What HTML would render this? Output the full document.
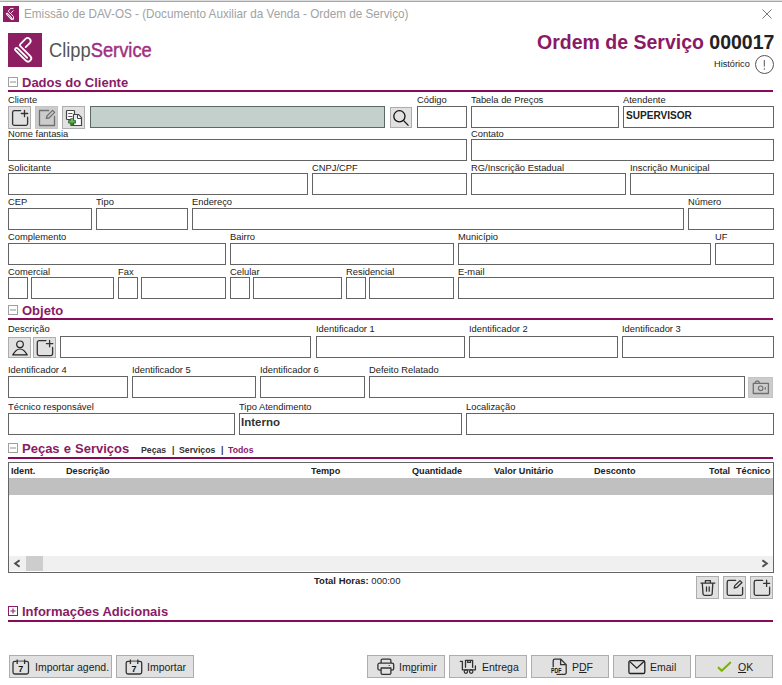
<!DOCTYPE html>
<html><head><meta charset="utf-8">
<style>
*{box-sizing:border-box;margin:0;padding:0}
html,body{width:782px;height:685px;overflow:hidden;background:#fff;font-family:"Liberation Sans",sans-serif;color:#222}
.a{position:absolute}
svg.a{overflow:visible}
.f{position:absolute;border:1px solid #646464;background:#fff}
.l{position:absolute;font-size:9.6px;color:#222;white-space:nowrap;line-height:10px;transform:scaleX(0.975);transform-origin:0 0}
.b{position:absolute;background:#e1e1e1;border:1px solid #adadad}
.sh{position:absolute;left:8px;width:10px;height:10px;border:1px solid #a0a0a0;background:#fff}
.sh:after{content:"";position:absolute;left:1px;top:3px;width:6px;height:2px;background:#c8c8c8}
.st{position:absolute;left:22px;font-weight:bold;font-size:13px;color:#8a1a66;white-space:nowrap;line-height:13px}
.sl{position:absolute;left:8px;width:765px;height:2px;background:#8a0a5a}
.th{position:absolute;top:466px;font-weight:bold;font-size:9.6px;color:#222;white-space:nowrap;line-height:10px;transform:scaleX(0.95);transform-origin:0 0}
.btn{position:absolute;top:655px;height:23px;background:#e1e1e1;border:1px solid #adadad;font-size:10.5px;color:#222;white-space:nowrap;line-height:21px;padding-top:1px}
.pk{top:445px;font-weight:bold;font-size:9.8px;color:#333;white-space:nowrap;line-height:10px;transform:scaleX(0.89);transform-origin:0 0}
.ic{fill:none;stroke:#333;stroke-width:1.3;stroke-linecap:round;stroke-linejoin:round}
.icg{fill:none;stroke:#707070;stroke-width:1.3;stroke-linecap:round;stroke-linejoin:round}
u{text-decoration:underline;text-underline-offset:1px}
</style></head><body>
<!-- title bar -->
<div class="a" style="left:0;top:0;width:782px;height:1px;background:#dcdcdc"></div>
<div class="a" style="left:0;top:1px;width:782px;height:1px;background:#a8a8a8"></div>
<svg class="a" style="left:3px;top:6px" width="16" height="16" viewBox="0 0 16 16">
<rect width="16" height="16" fill="#8e1e62"/>
<path d="M10.5 2.4H7.6L5.2 5.2L10.5 10.5V13.4H8.4M10.5 4.5L7.4 7.6" fill="none" stroke="#fff" stroke-width="0.9"/>
<path d="M4 7.8L8.6 12.8" fill="none" stroke="#fff" stroke-width="2.2" stroke-linecap="round"/>
<path d="M4.3 8.1L8.3 12.5" fill="none" stroke="#8e1e62" stroke-width="0.6"/>
</svg>
<div class="a" style="left:24px;top:6px;font-size:12.8px;color:#a2a2a2;white-space:nowrap;line-height:16px;transform:scaleX(0.915);transform-origin:0 0">Emissão de DAV-OS - (Documento Auxiliar da Venda - Ordem de Serviço)</div>
<svg class="a" style="left:762px;top:9px" width="10" height="10"><path d="M0.5 0.5L9.5 9.5M9.5 0.5L0.5 9.5" stroke="#6a6a6a" stroke-width="0.9"/></svg>

<!-- logo -->
<svg class="a" style="left:8px;top:33px" width="34" height="34" viewBox="0 0 34 34">
<rect width="34" height="34" fill="#8e1e62"/>
<g fill="none" stroke="#fff" stroke-width="1.8" stroke-linecap="round" stroke-linejoin="round">
<path d="M17.68 14.14L21.78 10.04A3 3 0 0 0 17.54 5.8L12.31 11.03A1.5 1.5 0 0 0 12.3 13.15L22.31 23.16A3.2 3.2 0 0 1 17.78 27.68L7.5 17.4A1.5 1.5 0 0 1 9.62 15.27L19.09 24.75"/>
</g>
</svg>
<div class="a" style="left:49px;top:38px;font-size:20px;color:#555;white-space:nowrap;line-height:24px;transform:scaleX(0.915);transform-origin:0 0">Clipp<span style="color:#a0307f;-webkit-text-stroke:0.45px #a0307f">Service</span></div>

<div class="a" style="left:537px;top:31px;font-weight:bold;font-size:19.5px;color:#8a1a66;white-space:nowrap;line-height:22px">Ordem de Serviço <span style="color:#222">000017</span></div>
<div class="a" style="left:714px;top:59px;font-size:9.2px;color:#222;white-space:nowrap;line-height:10px">Histórico</div>
<svg class="a" style="left:755px;top:55px" width="19" height="19" viewBox="0 0 19 19"><circle cx="9.5" cy="9.5" r="9" fill="none" stroke="#555" stroke-width="1"/><path d="M9.3 5V11.6M9.3 13.2V14.7" stroke="#555" stroke-width="1"/></svg>

<!-- Dados do Cliente -->
<div class="sh" style="top:77px"></div>
<div class="st" style="top:76px">Dados do Cliente</div>
<div class="sl" style="top:90px"></div>

<div class="l" style="left:8px;top:95px">Cliente</div>
<div class="b" style="left:8px;top:106px;width:23px;height:23px"></div>
<svg class="a" style="left:8px;top:106px" width="23" height="23"><path class="ic" d="M12.6 4.6H6.4A1.8 1.8 0 0 0 4.6 6.4V17.6A1.8 1.8 0 0 0 6.4 19.4H17.8A1.8 1.8 0 0 0 19.6 17.6V11.2M16.5 4.3V10.7M13.3 7.5H19.7"/></svg>
<div class="b" style="left:35px;top:106px;width:23px;height:23px;background:#cccccc;border-color:#c4c4c4"></div>
<svg class="a" style="left:35px;top:106px" width="23" height="23"><path class="icg" d="M13.6 4.5H4.5V19.5H19.5V10.5M11.3 12.4L12 10L17.6 4.4L19.6 6.4L14 12L11.3 12.4Z" stroke-width="1.15"/></svg>
<div class="b" style="left:62px;top:106px;width:23px;height:23px"></div>
<svg class="a" style="left:62px;top:106px" width="23" height="23">
<defs><linearGradient id="gg" x1="0" y1="0" x2="0" y2="1"><stop offset="0" stop-color="#9be07a"/><stop offset="1" stop-color="#0e800e"/></linearGradient></defs>
<rect x="4.5" y="4.5" width="8" height="9" rx="0.8" fill="#fff" stroke="#444" stroke-width="1.2"/>
<path d="M6.3 7.5H10.4M6.3 10.5H10.4" stroke="#555" stroke-width="1"/>
<path d="M11.5 8.5H16.5L19.5 11.5V19.5H11.5Z" fill="#fff" stroke="#444" stroke-width="1.2"/>
<path d="M15.5 8.5V12.5H19.5" fill="none" stroke="#444" stroke-width="1"/>
<rect x="12.7" y="9.5" width="2.2" height="3" fill="#cfe8f8"/>
<path d="M8.7 12.7H11.4V14.4H13.5V17.1H11.4V19.5H8.7V17.1H6.6V14.4H8.7Z" fill="url(#gg)" stroke="#2f4f2f" stroke-width="0.8"/>
</svg>
<div class="f" style="left:90px;top:106px;width:295px;height:22px;background:#c3d0cb;border-color:#5a6a60"></div>
<div class="b" style="left:390px;top:107px;width:22px;height:21px"></div>
<svg class="a" style="left:390px;top:107px" width="22" height="21"><circle cx="9.4" cy="9.3" r="5.6" fill="none" stroke="#111" stroke-width="1.3"/><path d="M13.6 13.6L18.5 18.6" stroke="#111" stroke-width="1.3"/></svg>
<div class="l" style="left:417px;top:95px">Código</div>
<div class="f" style="left:417px;top:106px;width:50px;height:22px"></div>
<div class="l" style="left:471px;top:95px">Tabela de Preços</div>
<div class="f" style="left:471px;top:106px;width:148px;height:22px"></div>
<div class="l" style="left:623px;top:95px">Atendente</div>
<div class="f" style="left:623px;top:106px;width:151px;height:22px"></div>
<div class="a" style="left:626px;top:110px;font-weight:bold;font-size:11px;color:#222;line-height:11px;transform:scaleX(0.915);transform-origin:0 0">SUPERVISOR</div>

<div class="l" style="left:8px;top:129px">Nome fantasia</div>
<div class="f" style="left:8px;top:139px;width:459px;height:22px"></div>
<div class="l" style="left:471px;top:129px">Contato</div>
<div class="f" style="left:471px;top:139px;width:303px;height:22px"></div>

<div class="l" style="left:8px;top:163px">Solicitante</div>
<div class="f" style="left:8px;top:173px;width:300px;height:22px"></div>
<div class="l" style="left:312px;top:163px">CNPJ/CPF</div>
<div class="f" style="left:312px;top:173px;width:155px;height:22px"></div>
<div class="l" style="left:471px;top:163px">RG/Inscrição Estadual</div>
<div class="f" style="left:471px;top:173px;width:155px;height:22px"></div>
<div class="l" style="left:630px;top:163px">Inscrição Municipal</div>
<div class="f" style="left:630px;top:173px;width:144px;height:22px"></div>

<div class="l" style="left:8px;top:197px">CEP</div>
<div class="f" style="left:8px;top:208px;width:84px;height:22px"></div>
<div class="l" style="left:96px;top:197px">Tipo</div>
<div class="f" style="left:96px;top:208px;width:92px;height:22px"></div>
<div class="l" style="left:192px;top:197px">Endereço</div>
<div class="f" style="left:192px;top:208px;width:492px;height:22px"></div>
<div class="l" style="left:688px;top:197px">Número</div>
<div class="f" style="left:688px;top:208px;width:86px;height:22px"></div>

<div class="l" style="left:8px;top:232px">Complemento</div>
<div class="f" style="left:8px;top:243px;width:218px;height:22px"></div>
<div class="l" style="left:230px;top:232px">Bairro</div>
<div class="f" style="left:230px;top:243px;width:224px;height:22px"></div>
<div class="l" style="left:458px;top:232px">Município</div>
<div class="f" style="left:458px;top:243px;width:253px;height:22px"></div>
<div class="l" style="left:715px;top:232px">UF</div>
<div class="f" style="left:715px;top:243px;width:59px;height:22px"></div>

<div class="l" style="left:8px;top:267px">Comercial</div>
<div class="f" style="left:8px;top:277px;width:20px;height:22px"></div>
<div class="f" style="left:31px;top:277px;width:83px;height:22px"></div>
<div class="l" style="left:118px;top:267px">Fax</div>
<div class="f" style="left:118px;top:277px;width:20px;height:22px"></div>
<div class="f" style="left:141px;top:277px;width:85px;height:22px"></div>
<div class="l" style="left:230px;top:267px">Celular</div>
<div class="f" style="left:230px;top:277px;width:20px;height:22px"></div>
<div class="f" style="left:253px;top:277px;width:89px;height:22px"></div>
<div class="l" style="left:346px;top:267px">Residencial</div>
<div class="f" style="left:346px;top:277px;width:20px;height:22px"></div>
<div class="f" style="left:369px;top:277px;width:85px;height:22px"></div>
<div class="l" style="left:458px;top:267px">E-mail</div>
<div class="f" style="left:458px;top:277px;width:316px;height:22px"></div>

<!-- Objeto -->
<div class="sh" style="top:305px"></div>
<div class="st" style="top:304px">Objeto</div>
<div class="sl" style="top:318px"></div>

<div class="l" style="left:8px;top:324px">Descrição</div>
<div class="b" style="left:8px;top:337px;width:23px;height:21px"></div>
<svg class="a" style="left:8px;top:337px" width="23" height="21"><circle cx="12" cy="7.3" r="3.3" fill="none" stroke="#222" stroke-width="1.2"/><path d="M4.8 17.9Q8 12 12 12Q16 12 19.2 17.9Z" fill="none" stroke="#222" stroke-width="1.2" stroke-linejoin="round"/></svg>
<div class="b" style="left:33px;top:337px;width:23px;height:21px"></div>
<svg class="a" style="left:33px;top:337px" width="23" height="21"><path class="ic" d="M13 3.6H6.1A1.8 1.8 0 0 0 4.3 5.4V16.8A1.8 1.8 0 0 0 6.1 18.6H17.8A1.8 1.8 0 0 0 19.6 16.8V10.4M16.6 3.4V9.8M13.4 6.6H19.8"/></svg>
<div class="f" style="left:60px;top:336px;width:251px;height:22px"></div>
<div class="l" style="left:316px;top:324px">Identificador 1</div>
<div class="f" style="left:316px;top:336px;width:149px;height:22px"></div>
<div class="l" style="left:469px;top:324px">Identificador 2</div>
<div class="f" style="left:469px;top:336px;width:149px;height:22px"></div>
<div class="l" style="left:622px;top:324px">Identificador 3</div>
<div class="f" style="left:622px;top:336px;width:152px;height:22px"></div>

<div class="l" style="left:8px;top:365px">Identificador 4</div>
<div class="f" style="left:8px;top:376px;width:120px;height:22px"></div>
<div class="l" style="left:132px;top:365px">Identificador 5</div>
<div class="f" style="left:132px;top:376px;width:124px;height:22px"></div>
<div class="l" style="left:260px;top:365px">Identificador 6</div>
<div class="f" style="left:260px;top:376px;width:105px;height:22px"></div>
<div class="l" style="left:369px;top:365px">Defeito Relatado</div>
<div class="f" style="left:369px;top:376px;width:376px;height:22px"></div>
<div class="b" style="left:748px;top:377px;width:25px;height:21px;background:#cccccc;border-color:#c4c4c4"></div>
<svg class="a" style="left:748px;top:377px" width="25" height="21"><path class="icg" d="M5.3 6.3H20.4V16.5H5.3Z" stroke-width="1.1"/><path class="icg" d="M7 6.2L8.2 4.2H10.6L11.6 6.2" stroke-width="1.1"/><circle cx="12.7" cy="11.3" r="2.3" fill="none" stroke="#707070" stroke-width="1.1"/><path d="M17.3 10V12.8" stroke="#707070" stroke-width="1.1"/></svg>

<div class="l" style="left:8px;top:402px">Técnico responsável</div>
<div class="f" style="left:8px;top:413px;width:227px;height:22px"></div>
<div class="l" style="left:239px;top:402px">Tipo Atendimento</div>
<div class="f" style="left:239px;top:413px;width:223px;height:22px"></div>
<div class="a" style="left:241px;top:416px;font-weight:bold;font-size:11.5px;color:#333;line-height:12px">Interno</div>
<div class="l" style="left:466px;top:402px">Localização</div>
<div class="f" style="left:466px;top:413px;width:308px;height:22px"></div>

<!-- Peças e Serviços -->
<div class="sh" style="top:443px"></div>
<div class="st" style="top:442px;word-spacing:0.5px">Peças e Serviços</div>
<div class="a pk" style="left:141px">Peças</div><div class="a pk" style="left:172px">|</div><div class="a pk" style="left:179px">Serviços</div><div class="a pk" style="left:221px">|</div><div class="a pk" style="left:228px;color:#8a1a66">Todos</div>
<div class="sl" style="top:457px"></div>

<div class="a" style="left:8px;top:462px;width:766px;height:111px;border:1px solid #646464;background:#fff"></div>
<div class="th" style="left:11px">Ident.</div>
<div class="th" style="left:66px">Descrição</div>
<div class="th" style="left:311px">Tempo</div>
<div class="th" style="left:412px">Quantidade</div>
<div class="th" style="left:494px">Valor Unitário</div>
<div class="th" style="left:594px">Desconto</div>
<div class="th" style="left:709px">Total</div>
<div class="th" style="left:736px">Técnico</div>
<div class="a" style="left:9px;top:478px;width:764px;height:17px;background:#c0c0c0"></div>
<div class="a" style="left:9px;top:556px;width:764px;height:15px;background:#f0f0f0"></div>
<div class="a" style="left:26px;top:556px;width:17px;height:15px;background:#cdcdcd"></div>
<svg class="a" style="left:9px;top:556px" width="764" height="16"><path d="M10.6 4.2L6.2 7.5L10.6 10.8" fill="none" stroke="#505050" stroke-width="2"/><path d="M753.4 4.2L757.8 7.5L753.4 10.8" fill="none" stroke="#505050" stroke-width="2"/></svg>

<div class="a" style="left:314px;top:576px;font-size:9.5px;color:#222;white-space:nowrap;line-height:10px"><b>Total Horas:</b> 000:00</div>
<div class="b" style="left:696px;top:576px;width:23px;height:23px"></div>
<svg class="a" style="left:696px;top:576px" width="23" height="23"><path class="ic" d="M5 7.1H18.9M9.4 7.1V4.6H14.4V7.1M6.3 7.1L7 17.6A1.8 1.8 0 0 0 8.8 19.4H14.4A1.8 1.8 0 0 0 16.2 17.6L16.8 7.1M10.5 11V15.2M13.2 11V15.2"/></svg>
<div class="b" style="left:723px;top:576px;width:23px;height:23px"></div>
<svg class="a" style="left:723px;top:576px" width="23" height="23"><path class="ic" d="M12.6 4.4H6A1.8 1.8 0 0 0 4.2 6.2V17.6A1.8 1.8 0 0 0 6 19.4H17.8A1.8 1.8 0 0 0 19.6 17.6V11.4M11.2 12L11.8 9.6L17 4.6L19 6.6L13.8 11.4Z"/></svg>
<div class="b" style="left:750px;top:576px;width:23px;height:23px"></div>
<svg class="a" style="left:750px;top:576px" width="23" height="23"><path class="ic" d="M12.6 4.4H6A1.8 1.8 0 0 0 4.2 6.2V17.6A1.8 1.8 0 0 0 6 19.4H17.8A1.8 1.8 0 0 0 19.6 17.6V11.2M16.6 4.2V10.4M13.5 7.3H19.7"/></svg>

<!-- Informações Adicionais -->
<div class="a" style="left:8px;top:606px;width:10px;height:10px;border:1px solid #8a1a66;background:#fff"></div>
<svg class="a" style="left:8px;top:606px" width="10" height="10"><path d="M5 2.5V7.5M2.5 5H7.5" stroke="#a85a90" stroke-width="1.6"/></svg>
<div class="st" style="top:605px">Informações Adicionais</div>
<div class="sl" style="top:620px"></div>

<!-- bottom buttons -->
<div class="btn" style="left:9px;width:103px;padding-left:25px">Importar agend.</div>
<svg class="a" style="left:9px;top:655px" width="30" height="23"><rect x="4" y="6.3" width="15.5" height="12.7" rx="1.8" fill="none" stroke="#333" stroke-width="1.3"/><path d="M8.2 6.3H15.6" stroke="#8a8a8a" stroke-width="1.5"/><path d="M8.2 4.4V9M15.6 4.4V9" stroke="#333" stroke-width="1.3"/><text x="11.8" y="17.3" font-family="Liberation Sans" font-weight="bold" font-size="9" text-anchor="middle" fill="#111">7</text></svg>
<div class="btn" style="left:116px;width:78px;padding-left:30px">Importar</div>
<svg class="a" style="left:116px;top:655px" width="30" height="23"><rect x="10.2" y="6.3" width="15.5" height="12.7" rx="1.8" fill="none" stroke="#333" stroke-width="1.3"/><path d="M14.4 6.3H21.8" stroke="#8a8a8a" stroke-width="1.5"/><path d="M14.4 4.4V9M21.8 4.4V9" stroke="#333" stroke-width="1.3"/><text x="18" y="17.3" font-family="Liberation Sans" font-weight="bold" font-size="9" text-anchor="middle" fill="#111">7</text></svg>
<div class="btn" style="left:367px;width:78px;padding-left:31px">Im<u>p</u>rimir</div>
<svg class="a" style="left:367px;top:655px" width="30" height="23"><path class="ic" d="M14.1 8.1V5.6A1.4 1.4 0 0 1 15.5 4.2H22.5A1.4 1.4 0 0 1 23.9 5.6V8.1M14.1 15.1H12.6A1.7 1.7 0 0 1 10.9 13.4V9.8A1.7 1.7 0 0 1 12.6 8.1H25A1.7 1.7 0 0 1 26.7 9.8V13.4A1.7 1.7 0 0 1 25 15.1H23.9M14.1 13H23.9V17.9A1.4 1.4 0 0 1 22.5 19.3H15.5A1.4 1.4 0 0 1 14.1 17.9Z"/><path d="M21.6 10.5H23" stroke="#555" stroke-width="1"/></svg>
<div class="btn" style="left:449px;width:78px;padding-left:32px">Entrega</div>
<svg class="a" style="left:449px;top:655px" width="30" height="23"><path class="ic" d="M11.3 6.3H13.4V14.8H26.4V10.9M16.5 12.3V5.3H23.6V12.3M18.6 5.3V7.4H21.5V5.3"/><circle cx="16.9" cy="16.6" r="1.7" fill="none" stroke="#333" stroke-width="1.2"/><circle cx="22.2" cy="16.6" r="1.7" fill="none" stroke="#333" stroke-width="1.2"/></svg>
<div class="btn" style="left:531px;width:78px;padding-left:40px">P<u>D</u>F</div>
<svg class="a" style="left:531px;top:655px" width="40" height="23"><path class="ic" d="M22.2 12V5.8A1.6 1.6 0 0 1 23.8 4.2H29.8L35.2 9.6V17.7A1.6 1.6 0 0 1 33.6 19.3H26M29.6 4.4V9.7H35"/><rect x="19" y="12.4" width="12" height="5.8" fill="#e1e1e1"/><text x="25.3" y="17.8" font-family="Liberation Sans" font-weight="bold" font-size="6.4" text-anchor="middle" fill="#111" transform="translate(25.3 0) scale(0.82 1) translate(-25.3 0)">PDF</text></svg>
<div class="btn" style="left:613px;width:78px;padding-left:36px">Email</div>
<svg class="a" style="left:613px;top:655px" width="40" height="23"><rect x="15.9" y="5.7" width="15.9" height="12.8" rx="1.6" fill="none" stroke="#222" stroke-width="1.3"/><path d="M16.8 6.6L23.8 13.2L30.9 6.6" fill="none" stroke="#222" stroke-width="1.3"/></svg>
<div class="btn" style="left:695px;width:78px;padding-left:42px"><u>O</u>K</div>
<svg class="a" style="left:695px;top:655px" width="40" height="23"><path d="M23.6 12.7L26.7 15.8L35.2 7.7" fill="none" stroke="#7ab400" stroke-width="2.1" stroke-linecap="round" stroke-linejoin="round"/></svg>
</body></html>
